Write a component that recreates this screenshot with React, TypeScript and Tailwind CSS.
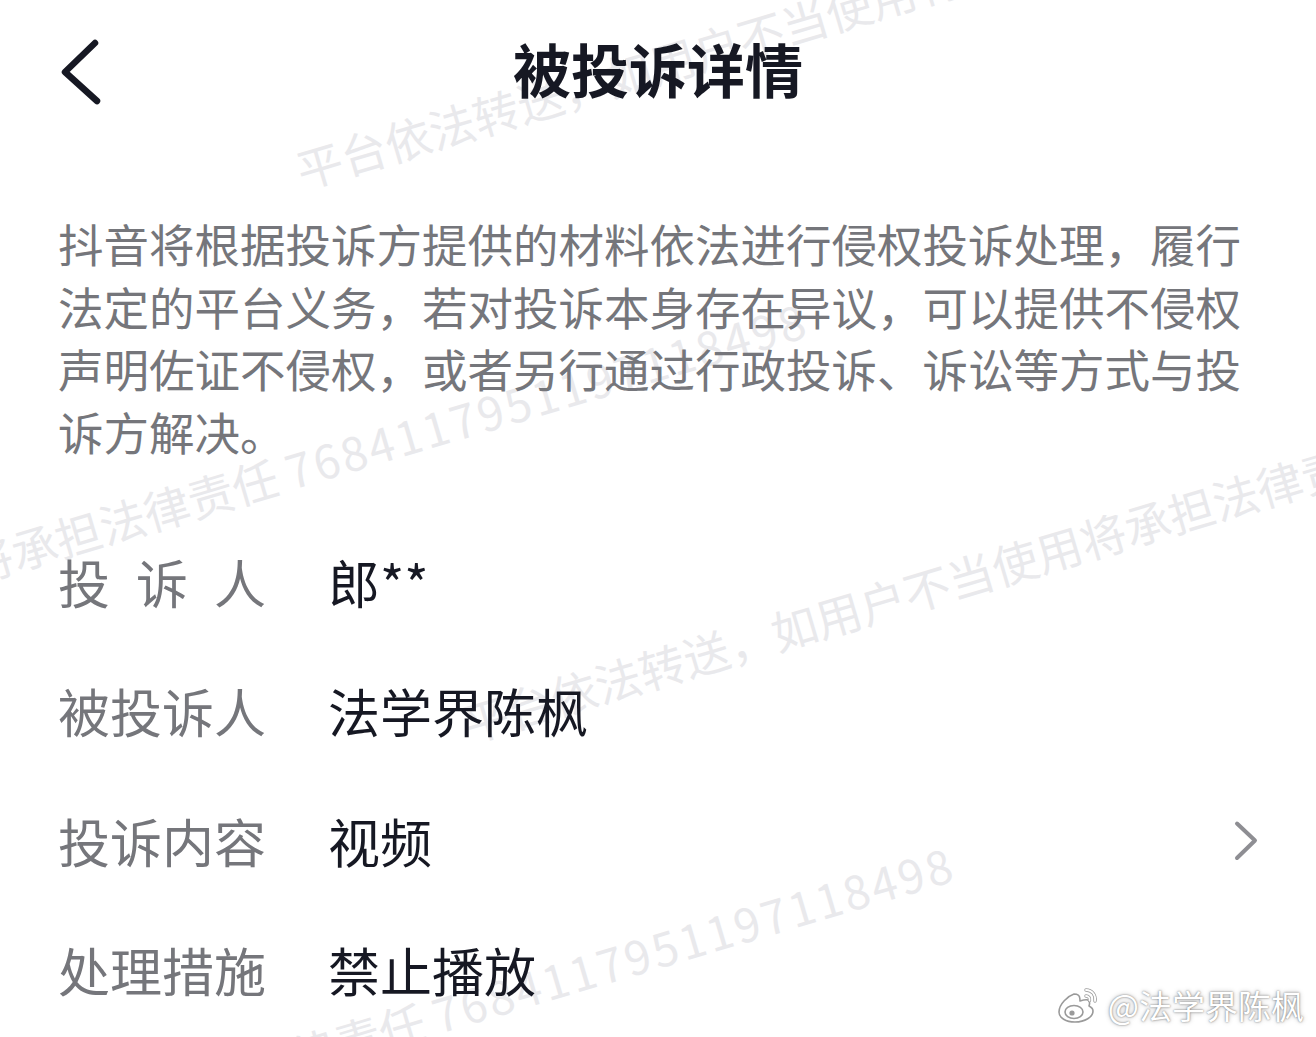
import React from "react";

const WATERMARK_TEXT = "平台依法转送，如用户不当使用将承担法律责任 ";
const WATERMARK_ID = "7684117951197118498";

const rows = [
  { label: ["投", "诉", "人"], value: "郎**" },
  { label: ["被投诉人"], value: "法学界陈枫" },
  { label: ["投诉内容"], value: "视频", link: true },
  { label: ["处理措施"], value: "禁止播放" },
];

function Watermark({ className }: { className: string }) {
  return (
    <span
      className={`absolute origin-left rotate-[-16.5deg] whitespace-nowrap text-[46px] leading-[46px] text-[#e9e9ec] ${className}`}
    >
      {WATERMARK_TEXT}
      <span className="tracking-[3px]">{WATERMARK_ID}</span>
    </span>
  );
}

function WeiboMark() {
  return (
    <div className="absolute right-[12px] bottom-[12px] flex items-center gap-[6px]">
      <svg width="48" height="40" viewBox="0 0 48 40" fill="none">
        <g stroke="#9a9a9a" strokeWidth="1.6" fill="#ffffff" strokeLinejoin="round">
          <path d="M20 9c-6 2-15 10-15 18 0 6 7 10 16 10 10 0 18-5 18-11 0-3-2-4-4-5 1-3 1-5-1-6-2-1-5 0-8 1 0-3 0-5-2-6-1-1-2-1-4-1z" />
          <ellipse cx="20" cy="27" rx="9" ry="6.5" />
          <circle cx="18" cy="28" r="2.6" fill="#9a9a9a" stroke="none" />
        </g>
        <g stroke="#9a9a9a" strokeWidth="3.4" strokeLinecap="round" fill="none">
          <path d="M32 5c6 0 10 5 9 11" />
          <path d="M32 11c2.5 0 4 2 3.5 4.5" />
        </g>
        <g stroke="#ffffff" strokeWidth="1.8" strokeLinecap="round" fill="none">
          <path d="M32 5c6 0 10 5 9 11" />
          <path d="M32 11c2.5 0 4 2 3.5 4.5" />
        </g>
      </svg>
      <span className="text-[33px] leading-none text-white [text-shadow:0_0_2px_rgba(0,0,0,0.55),0_0_5px_rgba(0,0,0,0.25)]">
        @法学界陈枫
      </span>
    </div>
  );
}

export default function App() {
  return (
    <div className="relative h-[1037px] w-full overflow-hidden bg-white font-['Noto_Sans_CJK_SC','Noto_Sans',sans-serif]">
      {/* watermark layer */}
      <div className="pointer-events-none absolute inset-0">
        <Watermark className="left-[297px] top-[147px]" />
        <Watermark className="left-[-650px] top-[725px]" />
        <Watermark className="left-[463px] top-[701px]" />
        <Watermark className="left-[-503px] top-[1269px]" />
      </div>

      <div className="relative">
        <header className="grid h-[144px] grid-cols-[1fr_auto_1fr] items-center">
          <div className="pl-[58px]">
            <svg width="44" height="70" viewBox="0 0 44 70" fill="none">
              <path
                d="M37 6 L7 35 L39 64"
                stroke="#161823"
                strokeWidth="6.5"
                strokeLinecap="round"
                strokeLinejoin="round"
              />
            </svg>
          </div>
          <h1 className="pb-[8px] text-[58px] font-bold leading-none text-[#161823]">被投诉详情</h1>
          <div />
        </header>

        <p className="mt-[68px] px-[58px] text-[45.5px] leading-[62.5px] text-[#75767b]">
          抖音将根据投诉方提供的材料依法进行侵权投诉处理，履行法定的平台义务，若对投诉本身存在异议，可以提供不侵权声明佐证不侵权，或者另行通过行政投诉、诉讼等方式与投诉方解决。
        </p>

        <div className="mt-[55px] px-[58px]">
          {rows.map((row) => (
            <div key={row.value} className="flex h-[129.5px] items-center">
              <div className="w-[270px]">
                <div className="flex w-[208px] justify-between text-[52px] leading-none text-[#75767b]">
                  {row.label.map((ch) => (
                    <span key={ch}>{ch}</span>
                  ))}
                </div>
              </div>
              <span className="text-[52px] leading-none text-[#161823]">{row.value}</span>
              {row.link && (
                <svg className="ml-auto" width="24" height="42" viewBox="0 0 24 42" fill="none">
                  <path
                    d="M3 3.5 L21 20.5 L3 38"
                    stroke="#8e8e93"
                    strokeWidth="4"
                    strokeLinecap="round"
                    strokeLinejoin="round"
                  />
                </svg>
              )}
            </div>
          ))}
        </div>
      </div>

      <WeiboMark />
    </div>
  );
}
